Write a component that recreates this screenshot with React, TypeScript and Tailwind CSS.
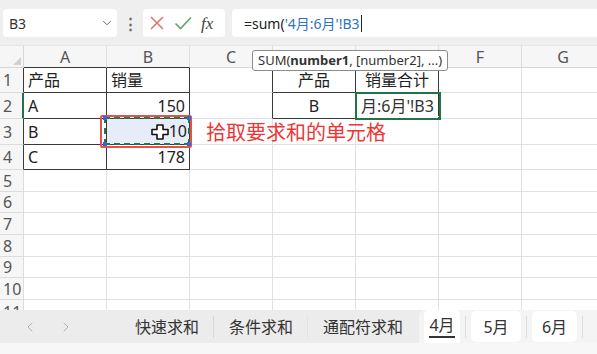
import { ChevronDown, ChevronLeft, ChevronRight } from "lucide-react";

const FONT = { fontFamily: '"Noto Sans", "Noto Sans CJK SC", sans-serif' };

const cols = ["A", "B", "C", "D", "E", "F", "G"];

type Row = {
  n: string;
  cells: { text?: string; cls: string }[];
};

const light = "border-r border-b border-[#e1e1e1]";

// rows 1-4 hold the two small tables, the rest are empty
const rows: Row[] = [
  {
    n: "1",
    cells: [
      { text: "产品", cls: "border-r border-b border-[#3a3a3a] pl-1" },
      { text: "销量", cls: "border-r border-b border-[#3a3a3a] pl-1" },
      { cls: "border-r border-b border-r-[#3a3a3a] border-b-[#e1e1e1]" },
      { text: "产品", cls: "border-r border-b border-[#3a3a3a] justify-center" },
      { text: "销量合计", cls: "border-r border-b border-[#3a3a3a] justify-center" },
      { cls: light },
      { cls: light },
    ],
  },
  {
    n: "2",
    cells: [
      { text: "A", cls: "border-r border-b border-[#3a3a3a] pl-1" },
      { text: "150", cls: "border-r border-b border-[#3a3a3a] justify-end pr-[4px]" },
      { cls: "border-r border-b border-r-[#3a3a3a] border-b-[#e1e1e1]" },
      { text: "B", cls: "border-r border-b border-[#3a3a3a] justify-center" },
      { cls: "border-r border-b border-[#3a3a3a]" },
      { cls: light },
      { cls: light },
    ],
  },
  {
    n: "3",
    cells: [
      { text: "B", cls: "border-r border-b border-[#3a3a3a] pl-1" },
      { cls: "border-r border-b border-[#3a3a3a] bg-[#e6edf8]" },
      { cls: light },
      { cls: light },
      { cls: light },
      { cls: light },
      { cls: light },
    ],
  },
  {
    n: "4",
    cells: [
      { text: "C", cls: "border-r border-b border-[#3a3a3a] pl-1" },
      { text: "178", cls: "border-r border-b border-[#3a3a3a] justify-end pr-[4px]" },
      { cls: light },
      { cls: light },
      { cls: light },
      { cls: light },
      { cls: light },
    ],
  },
  ...["5", "6", "7", "8", "9", "10", "11"].map((n) => ({
    n,
    cells: cols.map(() => ({ cls: light })),
  })),
];

const headerCls: Record<string, string> = {
  A: "border-b-[#3a3a3a]",
  B: "border-b-[#3a3a3a]",
  C: "border-b-[#d6d6d6]",
  D: "border-b-[#3a3a3a]",
  E: "border-b-[#3a3a3a]",
  F: "border-b-[#d6d6d6]",
  G: "border-b-[#d6d6d6]",
};

// D and E sit under the function tooltip, so their letters never show
const hiddenHeaders = ["D", "E"];

function CursorCross() {
  return (
    <svg width="18" height="16" viewBox="0 0 18 16">
      <path
        d="M6 1h6v4.5h5v5h-5V15H6v-4.5H1v-5h5z"
        fill="#fff"
        stroke="#111"
        strokeWidth="1.6"
        strokeLinejoin="round"
      />
    </svg>
  );
}

export default function App() {
  return (
    <div
      className="relative w-[597px] h-[354px] overflow-hidden bg-white text-[#222]"
      style={FONT}
    >
      {/* Formula bar */}
      <div className="h-[46px] bg-[#efefef] flex items-start pt-[9px] pl-[3px] border-b border-[#e6e6e6]">
        <div className="w-[114px] h-[28px] bg-white rounded-[4px] flex items-center pl-[6px] pr-[3px]">
          <span className="text-[14px] text-[#333] flex-1">B3</span>
          <ChevronDown size={14} strokeWidth={1.5} className="text-[#555]" />
        </div>
        <div className="w-[26px] h-[28px] flex items-center justify-center text-[#666] text-[15px] font-bold">
          ⋮
        </div>
        <div className="w-[82px] h-[28px] bg-white rounded-[4px] flex items-center gap-[9px] pl-[6px]">
          <svg width="16" height="16" viewBox="0 0 16 16">
            <path d="M2 2l12 12M14 2L2 14" stroke="#d9786a" strokeWidth="1.6" />
          </svg>
          <svg width="18" height="16" viewBox="0 0 18 16">
            <path d="M1.5 8.5l5 5L17 2.5" fill="none" stroke="#5fa46a" strokeWidth="1.6" />
          </svg>
          <span
            className="text-[17px] italic text-[#444] leading-none"
            style={{ fontFamily: '"Liberation Serif", serif' }}
          >
            fx
          </span>
        </div>
        <div className="ml-[7px] flex-1 h-[28px] bg-white rounded-l-[4px] flex items-center pl-[12px] text-[14px]">
          <span className="text-[#222]">=sum(</span>
          <span className="text-[#2f74c0]">'4月:6月'!B3</span>
          <span className="w-px h-[17px] bg-[#222] ml-[1px]" />
        </div>
      </div>

      {/* Grid */}
      <div className="h-[264px] overflow-hidden">
        <div className="grid grid-cols-[24px_repeat(7,83px)] grid-rows-[22px_25px_26px_26px_25px_22px_21px_22px_22px_21px_22px_20px] w-[605px]">
          <div className="bg-[#f6f6f6] border-r border-b border-[#d6d6d6] flex items-end justify-end p-[2px]">
            <svg width="8" height="8" viewBox="0 0 8 8">
              <path d="M8 0V8H0z" fill="#d0d0d0" />
            </svg>
          </div>
          {cols.map((c) => (
            <div
              key={c}
              className={`bg-[#f6f6f6] border-r border-b border-r-[#dcdcdc] ${headerCls[c]} flex items-center justify-center text-[16px] text-[#555]`}
            >
              {hiddenHeaders.includes(c) ? null : c}
            </div>
          ))}
          {rows.map((r) => (
            <div key={r.n} className="contents">
              <div
                className={`bg-[#f6f6f6] border-r border-b border-b-[#dcdcdc] flex items-center pl-[3px] text-[16px] text-[#555] overflow-hidden ${
                  r.n === "2"
                    ? "border-r-2 border-r-[#217346] text-[#1d6b40]"
                    : Number(r.n) <= 4
                    ? "border-r-[#3a3a3a]"
                    : "border-r-[#dcdcdc]"
                } ${r.n === "11" ? "items-start" : ""}`}
              >
                {r.n}
              </div>
              {r.cells.map((c, i) => (
                <div key={i} className={`flex items-center text-[16px] text-[#222] ${c.cls}`}>
                  {c.text}
                </div>
              ))}
            </div>
          ))}
        </div>
      </div>

      {/* Sheet tabs */}
      <div className="h-[33px] bg-[#ececec] flex items-center text-[16px] text-[#333] whitespace-nowrap">
        <ChevronLeft size={16} strokeWidth={1.4} className="shrink-0 ml-[22px] text-[#a8a8a8]" />
        <ChevronRight size={16} strokeWidth={1.4} className="shrink-0 ml-[20px] text-[#a8a8a8]" />
        <span className="shrink-0 ml-[61px]">快速求和</span>
        <span className="shrink-0 ml-[14px] w-px h-[22px] bg-[#d6d6d6]" />
        <span className="shrink-0 ml-[15px]">条件求和</span>
        <span className="shrink-0 ml-[14px] w-px h-[22px] bg-[#e2e2e2]" />
        <span className="shrink-0 ml-[15px]">通配符求和</span>
        <div className="shrink-0 ml-[16px] flex items-center h-full bg-[#f4f4f4] rounded-tl-[6px] pl-[5px] gap-[5px] pr-[20px]">
          <div className="h-[33px] w-[36px] bg-white rounded-t-[5px] flex flex-col items-center justify-center">
            <span className="leading-[20px]">4月</span>
            <span className="w-[26px] h-[2px] bg-[#333] mt-[1px]" />
          </div>
          <span className="w-px h-[22px] bg-[#dcdcdc]" />
          <div className="h-[31px] w-[50px] bg-white rounded-[5px] flex items-center justify-center">5月</div>
          <span className="w-px h-[22px] bg-[#dcdcdc]" />
          <div className="h-[31px] w-[45px] bg-white rounded-[5px] flex items-center justify-center">6月</div>
          <span className="w-px h-[22px] bg-[#dcdcdc]" />
        </div>
      </div>
      <div className="h-[11px] bg-[#f7f7f7]" />

      {/* Overlays: picked range on B3 */}
      <div className="absolute left-[100px] top-[115px] w-[92px] h-[33px] border-2 border-[#ee4d4d] rounded-[2px]" />
      <div className="absolute left-[104px] top-[117px] w-[86px] h-[28px] border-2 border-dashed border-[#1f7a45]">
        <span className="absolute -left-[3px] -top-[3px] w-[4px] h-[4px] bg-[#3366d6]" />
        <span className="absolute -right-[3px] -top-[3px] w-[4px] h-[4px] bg-[#3366d6]" />
        <span className="absolute -left-[3px] -bottom-[3px] w-[4px] h-[4px] bg-[#3366d6]" />
        <span className="absolute -right-[3px] -bottom-[3px] w-[4px] h-[4px] bg-[#3366d6]" />
        <span className="absolute right-[1px] top-0 leading-[24px] text-[16px] text-[#222]">10</span>
      </div>
      <div className="absolute left-[151px] top-[124px]">
        <CursorCross />
      </div>

      <div className="absolute left-[206px] top-[120px] text-[20px] leading-[26px] text-[#ee3535]">
        拾取要求和的单元格
      </div>

      {/* Active cell E2 in edit mode */}
      <div className="absolute left-[355px] top-[92px] w-[86px] h-[28px] border-2 border-[#217346] flex items-center pl-[4px] text-[16px] text-[#333] overflow-hidden">
        月:6月'!B3
        <span className="absolute -right-[3px] -bottom-[3px] w-[5px] h-[5px] bg-[#217346] border border-white" />
      </div>

      {/* Function tooltip */}
      <div className="absolute left-[252px] top-[50px] h-[21px] px-[5px] bg-white border border-[#8c8c8c] rounded-[3px] flex items-center text-[13px] text-[#333] whitespace-nowrap">
        SUM(<b className="font-bold">number1</b>, [number2], ...)
      </div>
    </div>
  );
}
